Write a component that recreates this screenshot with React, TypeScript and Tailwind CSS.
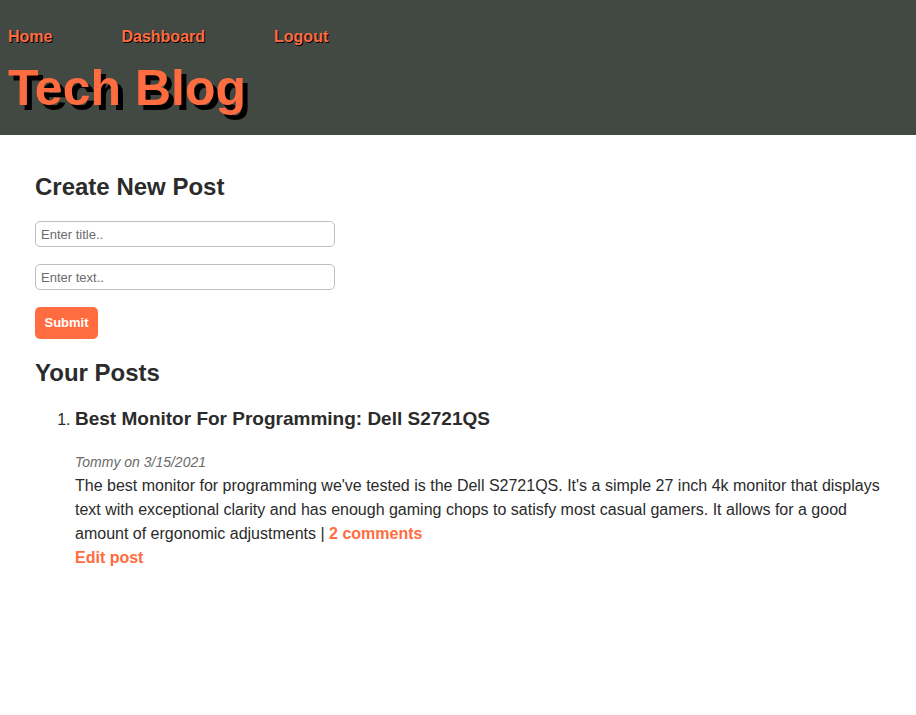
const navLink = "font-bold text-[#ff6c40] [text-shadow:1px_1px_#000]";
const postLink = "font-bold text-[#ff6c40]";
const field =
  "block h-[26px] w-[300px] rounded-[5px] border border-[#bfbfbf] bg-white px-[5px] text-[13px] text-[#2b2b2b] placeholder:text-[#6b6b6b] placeholder:opacity-100";

export default function App() {
  return (
    <div className="font-['Liberation_Sans',Arial,sans-serif] text-base text-[#2b2b2b]">
      <header className="bg-[#424842] px-2 pt-[25px] pb-3">
        <nav className="flex gap-[69px] leading-6">
          <a href="#home" className={navLink}>Home</a>
          <a href="#dashboard" className={navLink}>Dashboard</a>
          <a href="#logout" className={navLink}>Logout</a>
        </nav>
        <h1 className="mt-1 text-[50px] leading-[70px] font-bold text-[#ff6c40] [text-shadow:5px_5px_#000]">
          Tech Blog
        </h1>
      </header>
      <main className="px-[35px] pt-8">
        <section>
          <h2 className="text-2xl leading-10 font-bold">Create New Post</h2>
          <form className="mt-[14px] flex flex-col items-start gap-[17px]" onSubmit={(e) => e.preventDefault()}>
            <input type="text" aria-label="Title" placeholder="Enter title.." className={field} />
            <input type="text" aria-label="Text" placeholder="Enter text.." className={field} />
            <button
              type="submit"
              className="h-8 w-[63px] rounded-[5px] bg-[#ff6c40] text-[13px] font-bold text-white"
            >
              Submit
            </button>
          </form>
        </section>
        <section className="mt-[14px]">
          <h2 className="text-2xl leading-10 font-bold">Your Posts</h2>
          <ol className="mt-3 list-decimal pl-10 leading-6">
            <li>
              <h3 className="text-[19px] leading-7 font-bold">Best Monitor For Programming: Dell S2721QS</h3>
              <p className="mt-[17px] text-sm leading-6 text-[#6b6b6b] italic">Tommy on 3/15/2021</p>
              <p>
                The best monitor for programming we've tested is the Dell S2721QS. It's a simple 27 inch 4k monitor
                that displays text with exceptional clarity and has enough gaming chops to satisfy most casual gamers.
                It allows for a good amount of ergonomic adjustments |{" "}
                <a href="#comments" className={postLink}>2 comments</a>
              </p>
              <a href="#edit" className={postLink}>Edit post</a>
            </li>
          </ol>
        </section>
      </main>
    </div>
  );
}
